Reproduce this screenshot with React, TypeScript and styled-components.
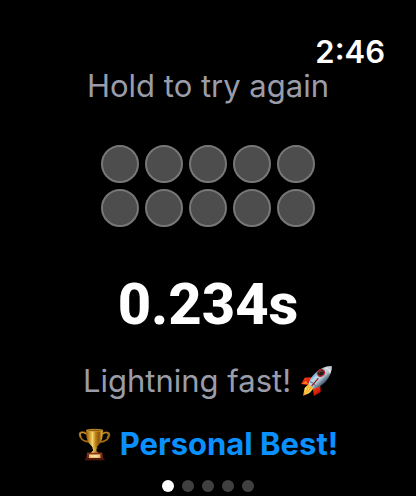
import React from "react";
import styled, { createGlobalStyle } from "styled-components";

const GlobalStyle = createGlobalStyle`
  body {
    margin: 0;
    background: #000;
    font-family: Inter, Roboto, sans-serif;
  }
`;

const Screen = styled.div`
  box-sizing: border-box;
  display: flex;
  flex-direction: column;
  min-height: 100vh;
  padding: 36px 0 4px;
  background: #000;
  color: #fff;
`;

const StatusBar = styled.header`
  display: flex;
  justify-content: flex-end;
  padding: 0 31px;
`;

const Clock = styled.time`
  font-size: 31px;
  line-height: 32px;
  font-weight: 600;
`;

const Content = styled.main`
  flex: 1;
  display: flex;
  flex-direction: column;
  align-items: center;
`;

const Message = styled.p<{ $accent?: boolean }>`
  display: flex;
  align-items: center;
  gap: 9px;
  margin: 0;
  font-size: 31px;
  line-height: 36px;
  white-space: nowrap;
  font-weight: ${(p) => (p.$accent ? 700 : 400)};
  color: ${(p) => (p.$accent ? "#0a91ff" : "#9a9da9")};
`;

const Lights = styled.div`
  display: grid;
  grid-template-columns: repeat(5, 38px);
  gap: 6px;
  margin: 41px 0 42px;
`;

const Light = styled.span`
  box-sizing: border-box;
  height: 38px;
  border: 2px solid #777;
  border-radius: 50%;
  background: #4d4d4d;
`;

const Score = styled.h1`
  margin: 0;
  font-family: Roboto, Inter, sans-serif;
  font-size: 58px;
  line-height: 70px;
  font-weight: 800;
`;

const Results = styled.section`
  display: flex;
  flex-direction: column;
  align-items: center;
  gap: 27px;
  margin-top: 24px;
`;

const Pages = styled.nav`
  display: flex;
  justify-content: center;
  gap: 8px;
  margin-top: 16px;
`;

const PageDot = styled.button<{ $current: boolean }>`
  width: 12px;
  height: 12px;
  padding: 0;
  border: 0;
  border-radius: 50%;
  background: ${(p) => (p.$current ? "#fff" : "#404040")};
`;

const Rocket = () => (
  <svg width="33" height="33" viewBox="13 15 99 99" role="img" aria-label="Rocket">
    <defs>
      <linearGradient id="hull" x1="50" y1="40" x2="82" y2="74" gradientUnits="userSpaceOnUse">
        <stop offset="0" stopColor="#5289b8" />
        <stop offset="0.35" stopColor="#b9d9ee" />
        <stop offset="0.6" stopColor="#b9cbdc" />
        <stop offset="1" stopColor="#34495f" />
      </linearGradient>
      <linearGradient id="flame" x1="52" y1="78" x2="22" y2="108" gradientUnits="userSpaceOnUse">
        <stop offset="0" stopColor="#ffb21b" />
        <stop offset="0.5" stopColor="#ffe567" />
        <stop offset="1" stopColor="#f18416" />
      </linearGradient>
      <linearGradient id="fin" x1="0" y1="0" x2="0.5" y2="1">
        <stop offset="0" stopColor="#ff4a20" />
        <stop offset="1" stopColor="#c90a04" />
      </linearGradient>
    </defs>
    <path d="M49 52 L27 53 Q23 61 16 72 L43 77 Z" fill="url(#fin)" />
    <path d="M18 71 L31 62 L38 73Z" fill="#ff7a12" />
    <path d="M74 77 L75 96 Q66 101 55 108 L51 84 Z" fill="url(#fin)" />
    <path d="M40 71 L27 84 L22 107 Q40 103 47 93 L56 82Z" fill="url(#flame)" />
    <path d="M38 79 L32 95 M46 82 L35 98" stroke="#ff981b" strokeWidth="3" />
    <path d="M38 72 Q43 53 62 36 Q82 18 108 19 Q109 44 90 65 Q74 81 54 86Z" fill="url(#hull)" />
    <path d="M82 25 Q95 19 108 19 Q109 30 103 43 Q97 31 82 25Z" fill="#c5cbd0" />
    <path d="M86 24 Q98 28 104 40 L107 30 Q98 31 94 22Z" fill="#fff" opacity="0.4" />
    <path d="M43 65 Q53 66 61 80" stroke="#4c6f93" strokeWidth="3" fill="none" />
    <path d="M67 56 Q60 64 49 77" stroke="#972018" strokeWidth="4" strokeLinecap="round" />
    <ellipse cx="76" cy="39" rx="11" ry="9" transform="rotate(-35 76 39)" fill="#24191d" stroke="#b72b2b" strokeWidth="4" />
    <path d="M70 38 Q75 32 81 34" stroke="#704650" strokeWidth="3" fill="none" />
  </svg>
);

const Trophy = () => (
  <svg width="33" height="33" viewBox="15 16 99 99" role="img" aria-label="Trophy">
    <defs>
      <linearGradient id="cup" x1="38" x2="92" gradientUnits="userSpaceOnUse">
        <stop offset="0" stopColor="#7c4c08" />
        <stop offset="0.18" stopColor="#c48b1c" />
        <stop offset="0.38" stopColor="#f5d56a" />
        <stop offset="0.55" stopColor="#bd7f19" />
        <stop offset="0.75" stopColor="#8a550b" />
        <stop offset="0.9" stopColor="#dba832" />
        <stop offset="1" stopColor="#7c4805" />
      </linearGradient>
    </defs>
    <path d="M42 35 Q32 25 22 30 Q17 34 23 45 Q30 57 48 57 M87 35 Q98 25 107 31 Q112 36 105 47 Q98 57 81 58" fill="none" stroke="#a76b0d" strokeWidth="5" strokeLinecap="round" />
    <path d="M41 34 Q31 27 23 31 Q20 35 25 44 M88 34 Q98 27 105 32 Q108 37 102 46" fill="none" stroke="#e2b850" strokeWidth="2" />
    <path d="M39 23 Q65 17 91 23 Q90 49 81 62 Q74 70 70 75 V84 L78 93 H51 L60 84 V75 Q55 70 48 62 Q38 47 39 23Z" fill="url(#cup)" />
    <ellipse cx="65" cy="23" rx="25" ry="3" fill="#80500d" stroke="#dfa634" strokeWidth="2" />
    <path d="M57 76 H73 M60 82 H70" stroke="#e8b13a" strokeWidth="3" />
    <path d="M42 91 H88 L90 108 H40Z" fill="#7a2b13" />
    <path d="M36 107 H94 V113 H36Z" fill="#4d170b" />
    <path d="M42 91 H88" stroke="#a84b22" strokeWidth="2" />
    <rect x="48" y="95" width="34" height="11" fill="#e9bb72" />
    <path d="M52 99 H77 M54 102 H75" stroke="#fff0b5" strokeWidth="2" />
  </svg>
);

const lights = Array.from({ length: 10 }, (_, i) => i);
const pages = [1, 2, 3, 4, 5];

export default function App() {
  return (
    <>
      <GlobalStyle />
      <Screen>
        <StatusBar>
          <Clock>2:46</Clock>
        </StatusBar>
        <Content>
          <Message>Hold to try again</Message>
          <Lights aria-hidden="true">
            {lights.map((light) => (
              <Light key={light} />
            ))}
          </Lights>
          <Score>0.234s</Score>
          <Results>
            <Message>
              Lightning fast!
              <Rocket />
            </Message>
            <Message $accent>
              <Trophy />
              Personal Best!
            </Message>
          </Results>
        </Content>
        <Pages aria-label="Pages">
          {pages.map((page) => (
            <PageDot
              key={page}
              type="button"
              $current={page === 1}
              aria-label={`Page ${page}`}
              aria-current={page === 1 ? "page" : undefined}
            />
          ))}
        </Pages>
      </Screen>
    </>
  );
}
